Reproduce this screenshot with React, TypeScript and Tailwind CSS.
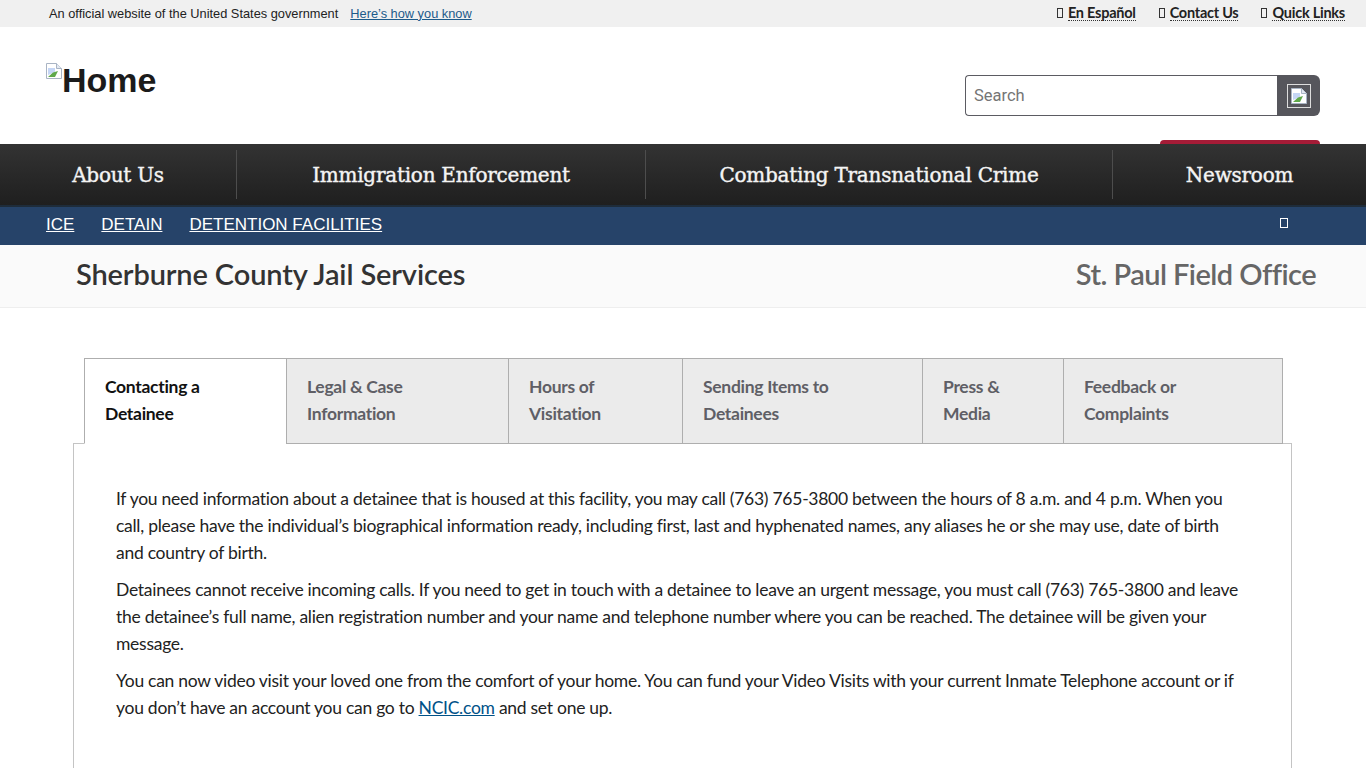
const sans = "font-['Lato','Noto_Sans',sans-serif]";

const BrokenImage = () => (
  <svg width="16" height="16" viewBox="0 0 16 16" className="shrink-0">
    <path d="M0.5 0.5H10.5L15.5 5.5V15.5H0.5Z" fill="#fff" stroke="#a9b4c4" />
    <path d="M10.5 0.5V5.5H15.5" fill="#e4e9f2" stroke="#a9b4c4" />
    <path d="M2 5H9V9L2 12Z" fill="#c5d6f5" />
    <path d="M2 14L7 9.5L12 8L9 14Z" fill="#5fa84a" />
  </svg>
);

const MissingGlyph = () => (
  <span className="inline-block w-[6px] h-[10px] border border-[#333] mr-[5px]" />
);

const topLinks = ["En Español", "Contact Us", "Quick Links"];

const navItems = [
  { label: "About Us", width: "w-[237px]" },
  { label: "Immigration Enforcement", width: "w-[409px]" },
  { label: "Combating Transnational Crime", width: "w-[467px]" },
  { label: "Newsroom", width: "w-[253px]" },
];

const tabs = [
  { lines: ["Contacting a", "Detainee"], width: "w-[203px]", active: true },
  { lines: ["Legal & Case", "Information"], width: "w-[223px]", active: false },
  { lines: ["Hours of", "Visitation"], width: "w-[175px]", active: false },
  { lines: ["Sending Items to", "Detainees"], width: "w-[241px]", active: false },
  { lines: ["Press &", "Media"], width: "w-[142px]", active: false },
  { lines: ["Feedback or", "Complaints"], width: "w-[220px]", active: false },
];

export default function App() {
  return (
    <div className={`h-[768px] overflow-hidden bg-white text-[#1b1b1b] ${sans}`}>
      <div className="h-[27px] bg-[#f0f0f0] flex items-center justify-between pl-[49px] pr-[21px]">
        <div className="flex text-[12.8px] font-['Liberation_Sans',sans-serif]">
          <span className="text-[#222]">An official website of the United States government</span>
          <a href="#" className="ml-[12px] text-[#1c5a8a] underline">Here’s how you know</a>
        </div>
        <div className="flex gap-[23px] pb-[2px] text-[14.5px] font-bold tracking-[-0.25px] text-[#222]">
          {topLinks.map((l) => (
            <a key={l} href="#" className="flex items-center">
              <MissingGlyph />
              <span className="border-b border-dotted border-[#333] leading-[15px]">{l}</span>
            </a>
          ))}
        </div>
      </div>

      <div className="relative h-[117px] flex justify-between pl-[46px] pr-[46px]">
        <div className="flex items-start pt-[36px]">
          <BrokenImage />
          <span className="-mt-px text-[34px] leading-[36px] font-bold font-['Liberation_Sans',sans-serif] text-[#1b1b1b]">Home</span>
        </div>
        <div className="flex pt-[48px] h-[89px]">
          <input
            placeholder="Search"
            className="w-[312px] h-[41px] border border-[#5b5b62] border-r-0 rounded-l-[4px] px-[8px] text-[16.5px] font-['Roboto',sans-serif] placeholder:text-[#757575] outline-none"
          />
          <div className="w-[43px] h-[41px] bg-[#56565c] rounded-r-[6px] flex items-center justify-center">
            <div className="w-[24px] h-[24px] border border-[#ddd] flex items-center justify-center">
              <BrokenImage />
            </div>
          </div>
        </div>
        <div className="absolute right-[46px] bottom-0 w-[160px] h-[4px] bg-[#a51c37] rounded-t-[4px]" />
      </div>

      <nav className="h-[63px] flex bg-gradient-to-b from-[#333333] to-[#1f1f1f] border-b-2 border-[#1e2c3a]">
        {navItems.map((item, i) => (
          <div key={item.label} className={`${item.width} flex items-center justify-center py-[6px]`}>
            <div className={`w-full h-full flex items-center justify-center ${i < 3 ? "border-r border-[#4d4d4d]" : ""}`}>
              <a href="#" className="text-[20px] font-normal tracking-[-0.25px] text-[#f4f4f4] [-webkit-text-stroke:0.4px_#f4f4f4] font-['DejaVu_Serif',serif]">
                {item.label}
              </a>
            </div>
          </div>
        ))}
      </nav>

      <div className="h-[38px] bg-[#264369] flex items-center justify-between pl-[46px] pr-[78px] font-['Liberation_Sans',sans-serif] text-[17px] text-white">
        <div className="flex gap-[27px] pb-[2px]">
          <a href="#" className="underline">ICE</a>
          <a href="#" className="underline">DETAIN</a>
          <a href="#" className="underline">DETENTION FACILITIES</a>
        </div>
        <span className="inline-block w-[8px] h-[10px] border border-white mb-[6px]" />
      </div>

      <div className="h-[63px] bg-[#fafafa] border-b border-[#eeeeee] flex items-center justify-between pl-[76px] pr-[50px] pb-[4px] text-[29px] font-semibold">
        <h1 className="text-[#333] tracking-[-0.13px]">Sherburne County Jail Services</h1>
        <h2 className="text-[#666] tracking-[-0.55px]">St. Paul Field Office</h2>
      </div>

      <div className="pt-[50px] px-[73px]">
        <div className="flex pl-[11px] relative z-10">
          {tabs.map((t) => (
            <div
              key={t.lines[0]}
              className={`${t.width} border border-[#aeaeae] -ml-px first:ml-0 h-[86px] px-[20px] pt-[14px] text-[17.5px] leading-[27px] font-bold tracking-[-0.3px] ${
                t.active ? "bg-white text-[#111] border-b-white" : "bg-[#ebebeb] text-[#5f5f66]"
              }`}
            >
              <div>{t.lines[0]}</div>
              <div>{t.lines[1]}</div>
            </div>
          ))}
        </div>
        <div className="-mt-px w-[1219px] h-[400px] border border-[#c4c4c4] px-[42px] pt-[41px] text-[17.5px] leading-[27px] text-[#222] tracking-[-0.27px]">
          <p className="mb-[10px]">
            If you need information about a detainee that is housed at this facility, you may call (763) 765-3800 between the hours of 8 a.m. and 4 p.m. When you call, please have the individual’s biographical information ready, including first, last and hyphenated names, any aliases he or she may use, date of birth and country of birth.
          </p>
          <p className="mb-[10px]">
            Detainees cannot receive incoming calls. If you need to get in touch with a detainee to leave an urgent message, you must call (763) 765-3800 and leave the detainee’s full name, alien registration number and your name and telephone number where you can be reached. The detainee will be given your message.
          </p>
          <p>
            You can now video visit your loved one from the comfort of your home. You can fund your Video Visits with your current Inmate Telephone account or if you don’t have an account you can go to{" "}
            <a href="#" className="text-[#005288] underline">NCIC.com</a> and set one up.
          </p>
        </div>
      </div>
    </div>
  );
}
